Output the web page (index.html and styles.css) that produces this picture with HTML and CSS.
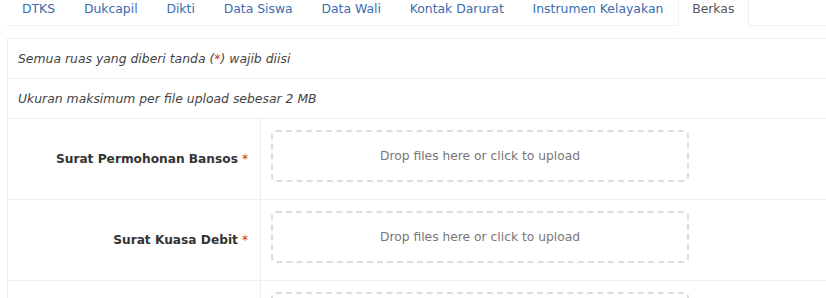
FILE: index.html
```html
<!DOCTYPE html>
<html>
<head>
<meta charset="utf-8">
<link rel="stylesheet" href="styles.css">
</head>
<body>
<div class="page">
  <ul class="tabs">
    <li class="tab">DTKS</li>
    <li class="tab">Dukcapil</li>
    <li class="tab">Dikti</li>
    <li class="tab">Data Siswa</li>
    <li class="tab">Data Wali</li>
    <li class="tab">Kontak Darurat</li>
    <li class="tab">Instrumen Kelayakan</li>
    <li class="tab active">Berkas</li>
  </ul>
  <div class="panel">
    <div class="note">Semua ruas yang diberi tanda (<span class="req">*</span>) wajib diisi</div>
    <div class="note">Ukuran maksimum per file upload sebesar 2 MB</div>
    <div class="row">
      <div class="label">Surat Permohonan Bansos <span class="req">*</span></div>
      <div class="field"><div class="dropzone">Drop files here or click to upload</div></div>
    </div>
    <div class="row">
      <div class="label">Surat Kuasa Debit <span class="req">*</span></div>
      <div class="field"><div class="dropzone">Drop files here or click to upload</div></div>
    </div>
    <div class="row">
      <div class="label"></div>
      <div class="field"><div class="dropzone">Drop files here or click to upload</div></div>
    </div>
  </div>
</div>
</body>
</html>
```
FILE: styles.css
```css
html, body {
  margin: 0;
  padding: 0;
  background: #fff;
  overflow: hidden;
}
body {
  font-family: "DejaVu Sans", Verdana, sans-serif;
  font-size: 12px;
  color: #333;
}
.page {
  padding-left: 7px;
  margin-right: -20px;
}
.tabs {
  list-style: none;
  margin: 0;
  padding: 0 0 0 0.6px;
  display: flex;
  border-bottom: 1px solid #f0f0f0;
}
.tab {
  padding: 1px 13.4px 8px;
  line-height: 16px;
  font-size: 12.4px;
  color: #3b6cb0;
  border-left: 1px solid transparent;
  border-right: 1px solid transparent;
  margin-bottom: -1px;
}
.tab.active {
  color: #555;
  background: #fff;
  border-left-color: #f0f0f0;
  border-right-color: #f0f0f0;
  border-bottom: 1px solid #fff;
}
.panel {
  margin-top: 12px;
  border-top: 1px solid #eee;
  border-left: 1px solid #eee;
}
.note {
  padding: 12px 10px 11px;
  line-height: 16px;
  font-size: 12.4px;
  font-style: italic;
  color: #444;
  border-bottom: 1px solid #eee;
}
.req {
  color: #c9302c;
}
.row {
  display: flex;
  border-bottom: 1px solid #eee;
}
.label {
  width: 240px;
  flex: none;
  padding-right: 12px;
  text-align: right;
  font-weight: bold;
  font-size: 12.2px;
  display: flex;
  align-items: center;
  justify-content: flex-end;
  gap: 4px;
  border-right: 1px solid #eee;
}
.label .req {
  font-weight: normal;
}
.field {
  flex: 1;
  padding: 11px 0 17px 10px;
}
.dropzone {
  width: 414px;
  height: 48px;
  border: 2px dashed #ddd;
  border-radius: 5px;
  display: flex;
  align-items: center;
  justify-content: center;
  font-size: 12.3px;
  color: #777;
}
```
